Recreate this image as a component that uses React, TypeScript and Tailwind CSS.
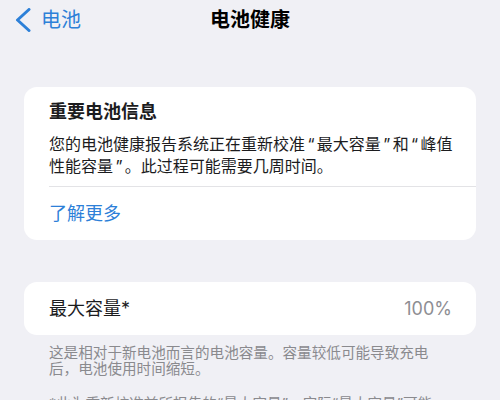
function Q({ children }: { children: string }) {
  // iOS quotes sit a little wider than the Latin font's
  return <span className="mx-[2.4px]">{children}</span>;
}

export default function App() {
  return (
    <div
      className="w-[500px] h-[400px] overflow-hidden bg-[#f0f0f5] text-[#1c1c1e]"
      style={{ fontFamily: '"Inter", "Noto Sans CJK SC", sans-serif' }}
    >
      {/* Nav bar */}
      <div className="grid grid-cols-[1fr_auto_1fr] items-center h-[39px]">
        <div className="flex items-center pl-[15px] gap-[10px] text-[#2d80d8]">
          <svg width="16" height="24" viewBox="0 0 16 24" fill="none">
            <path
              d="M14 1.5 L2.5 12 L14 22.5"
              stroke="currentColor"
              strokeWidth="3"
              strokeLinecap="round"
              strokeLinejoin="round"
            />
          </svg>
          <span className="text-[20px] leading-none">电池</span>
        </div>
        <span className="text-[20px] font-semibold leading-none text-black">电池健康</span>
        <div />
      </div>

      {/* Important info card */}
      <div className="mt-[48px] mx-[24px] rounded-[13px] bg-white pl-[25px] pt-[13px] pb-[14px]">
        <div className="text-[18px] font-semibold leading-[24px]">重要电池信息</div>
        <p className="mt-[9px] text-[16px] leading-[22px] whitespace-nowrap pr-[24px]">
          您的电池健康报告系统正在重新校准<Q>“</Q>最大容量<Q>”</Q>和<Q>“</Q>峰值
          <br />
          性能容量<Q>”</Q>。此过程可能需要几周时间。
        </p>
        <div className="mt-[9px] h-px bg-[#e3e3e6]" />
        <div className="mt-[15px] text-[18px] leading-[24px] text-[#2d80d8]">了解更多</div>
      </div>

      {/* Maximum capacity */}
      <div className="mt-[42px] mx-[24px] h-[53px] rounded-[13px] bg-white px-[25px] pr-[24px] flex items-center justify-between">
        <span className="text-[18px] leading-none">最大容量*</span>
        <span className="text-[18px] leading-none text-[#8e8e93]">100%</span>
      </div>

      {/* Footer notes */}
      <div className="mt-[10px] px-[49px] text-[14.6px] leading-[16px] text-[#8a8a8e] whitespace-nowrap">
        <p>
          这是相对于新电池而言的电池容量。容量较低可能导致充电
          <br />
          后，电池使用时间缩短。
        </p>
        <p className="mt-[19px]">*此为重新校准前所报告的“最大容量”。实际“最大容量”可能</p>
      </div>
    </div>
  );
}
